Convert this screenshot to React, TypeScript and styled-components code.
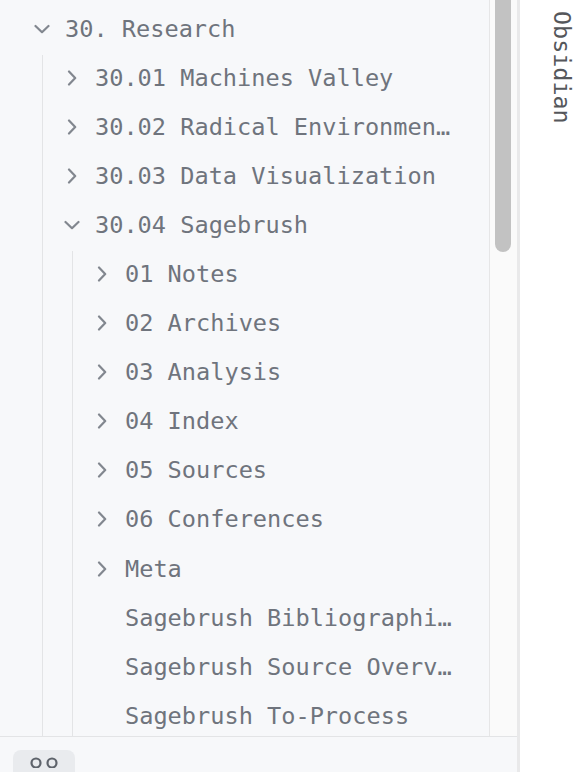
import React from 'react';
import styled, { createGlobalStyle } from 'styled-components';

interface Node {
  name: string;
  open?: boolean;
  folder?: boolean;
  children?: Node[];
}

const tree: Node[] = [
  {
    name: '30. Research',
    folder: true,
    open: true,
    children: [
      { name: '30.01 Machines Valley', folder: true },
      { name: '30.02 Radical Environmental Humanities', folder: true },
      { name: '30.03 Data Visualization', folder: true },
      {
        name: '30.04 Sagebrush',
        folder: true,
        open: true,
        children: [
          { name: '01 Notes', folder: true },
          { name: '02 Archives', folder: true },
          { name: '03 Analysis', folder: true },
          { name: '04 Index', folder: true },
          { name: '05 Sources', folder: true },
          { name: '06 Conferences', folder: true },
          { name: 'Meta', folder: true },
          { name: 'Sagebrush Bibliographic Notes' },
          { name: 'Sagebrush Source Overview' },
          { name: 'Sagebrush To-Process' },
          { name: 'Sagebrush Timeline' },
        ],
      },
    ],
  },
];

const GlobalStyle = createGlobalStyle`
  html, body {
    margin: 0;
    padding: 0;
    height: 100%;
    overflow: hidden;
    background: #ffffff;
  }
  #root {
    height: 100%;
  }
`;

const Chevron: React.FC<{ open?: boolean }> = ({ open }) => (
  <svg width="16" height="16" viewBox="0 0 16 16" fill="none">
    {open ? (
      <path d="M1.5 5L8 11.2L14.5 5" stroke="#82878f" strokeWidth="2.2" strokeLinecap="round" strokeLinejoin="round" />
    ) : (
      <path d="M5 1.5L11.2 8L5 14.5" stroke="#82878f" strokeWidth="2.2" strokeLinecap="round" strokeLinejoin="round" />
    )}
  </svg>
);

const TreeItem: React.FC<{ node: Node }> = ({ node }) => (
  <>
    <Row>
      <Toggle>{node.folder && <Chevron open={node.open} />}</Toggle>
      <Label>{node.name}</Label>
    </Row>
    {node.open && node.children && (
      <Children>
        {node.children.map((child) => (
          <TreeItem key={child.name} node={child} />
        ))}
      </Children>
    )}
  </>
);

const App: React.FC = () => (
  <>
    <GlobalStyle />
    <Layout>
      <Sidebar>
        <Body>
          <Tree>
            {tree.map((node) => (
              <TreeItem key={node.name} node={node} />
            ))}
          </Tree>
          <Track>
            <Thumb />
          </Track>
        </Body>
        <StatusBar>
          <VaultButton>
            <svg width="30" height="14" viewBox="0 0 30 14" fill="none">
              <circle cx="7" cy="9" r="4.5" stroke="#5e636b" strokeWidth="2.2" />
              <circle cx="23" cy="9" r="4.5" stroke="#5e636b" strokeWidth="2.2" />
            </svg>
          </VaultButton>
        </StatusBar>
      </Sidebar>
      <RightPane>
        <TabTitle>Obsidian</TabTitle>
      </RightPane>
    </Layout>
  </>
);

export default App;

const Layout = styled.div`
  display: flex;
  height: 100%;
  font-family: 'DejaVu Sans Mono', 'Liberation Mono', monospace;
`;

const Sidebar = styled.div`
  width: 517px;
  flex-shrink: 0;
  display: flex;
  flex-direction: column;
  background: #f7f8fa;
  border-right: 3px solid #e9e9ea;
`;

const Body = styled.div`
  flex: 1;
  display: flex;
  min-height: 0;
  border-bottom: 1px solid #e3e4e6;
`;

const Tree = styled.div`
  flex: 1;
  min-width: 0;
  padding: 6px 31px 0 30px;
  overflow: hidden;
`;

const Row = styled.div`
  display: flex;
  align-items: center;
  height: 45px;
  margin-bottom: 4.1px;
  min-width: 0;
`;

const Toggle = styled.div`
  width: 24px;
  flex-shrink: 0;
  display: flex;
  justify-content: center;
  align-items: center;
  margin-right: 11px;
`;

const Label = styled.div`
  flex: 1;
  min-width: 0;
  font-size: 23.6px;
  color: #6f747d;
  white-space: nowrap;
  overflow: hidden;
  text-overflow: ellipsis;
`;

const Children = styled.div`
  margin-left: 12px;
  padding-left: 17px;
  border-left: 1px solid #e3e4e6;
`;

const Track = styled.div`
  width: 27px;
  flex-shrink: 0;
  background: #fafafa;
  border-left: 1px solid #e6e6e7;
  display: flex;
  justify-content: center;
`;

const Thumb = styled.div`
  width: 16px;
  height: 252px;
  margin-left: -2px;
  background: #c2c2c2;
  border-radius: 0 0 8px 8px;
`;

const StatusBar = styled.div`
  height: 35px;
  flex-shrink: 0;
  padding: 13px 0 0 13px;
  box-sizing: border-box;
`;

const VaultButton = styled.div`
  width: 62px;
  height: 34px;
  border-radius: 8px;
  background: #e9ebee;
  display: flex;
  justify-content: center;
  align-items: flex-start;
  padding-top: 4px;
  box-sizing: border-box;
`;

const RightPane = styled.div`
  flex: 1;
  background: #ffffff;
  display: flex;
  justify-content: center;
  padding-top: 11px;
`;

const TabTitle = styled.div`
  writing-mode: vertical-rl;
  font-size: 23.4px;
  color: #55575b;
  margin-left: 26px;
  height: fit-content;
`;
